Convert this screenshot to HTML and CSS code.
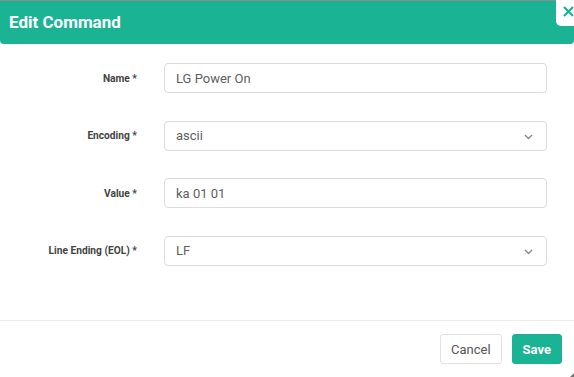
FILE: index.html
```html
<!DOCTYPE html>
<html lang="en">
<head>
  <meta charset="UTF-8">
  <meta name="viewport" content="width=device-width, initial-scale=1.0">
  <title>Edit Command</title>
  <link rel="stylesheet" href="styles.css">
</head>
<body>
  <div class="modal">
    <div class="modal-header">
      <h4>Edit Command</h4>
    </div>
    <button class="close-btn" aria-label="Close">
      <svg width="11" height="11" viewBox="0 0 11 11"><path d="M1 1L10 10M10 1L1 10" stroke="#1ab394" stroke-width="2.2" fill="none"/></svg>
    </button>
    <form class="modal-body">
      <label class="form-label">Name *</label>
      <div class="field"><input type="text" class="form-control" value="LG Power On"></div>

      <label class="form-label">Encoding *</label>
      <div class="field select">
        <div class="form-control">ascii</div>
        <svg class="chevron" width="9" height="6" viewBox="0 0 9 6"><path d="M1 1L4.5 4.5L8 1" stroke="#8a8a8a" stroke-width="1.4" fill="none"/></svg>
      </div>

      <label class="form-label">Value *</label>
      <div class="field"><input type="text" class="form-control" value="ka 01 01"></div>

      <label class="form-label">Line Ending (EOL) *</label>
      <div class="field select">
        <div class="form-control">LF</div>
        <svg class="chevron" width="9" height="6" viewBox="0 0 9 6"><path d="M1 1L4.5 4.5L8 1" stroke="#8a8a8a" stroke-width="1.4" fill="none"/></svg>
      </div>
    </form>
    <div class="modal-footer">
      <button class="btn btn-white">Cancel</button>
      <button class="btn btn-primary">Save</button>
    </div>
    <span class="grip"></span>
  </div>
</body>
</html>
```

FILE: styles.css
```css
body {
  margin: 0;
  background: #8c8c8c;
  font-family: Roboto, "Liberation Sans", Arial, sans-serif;
  color: #333;
}
.modal {
  position: relative;
  margin-top: 1px;
  height: 376px;
  background: #fff;
  display: flex;
  flex-direction: column;
}
.modal-header {
  background: #1ab394;
  height: 43px;
  border-radius: 0 0 4px 4px;
  display: flex;
  align-items: center;
  padding: 0 9px;
}
.modal-header h4 {
  margin: 0;
  color: #fff;
  font-size: 17px;
  font-weight: 700;
  padding-bottom: 2px;
}
.close-btn {
  position: absolute;
  top: -1px;
  right: 0;
  width: 18px;
  height: 26px;
  border: none;
  background: #fff;
  border-radius: 0 0 0 5px;
  padding: 0 0 0 7px;
  display: flex;
  align-items: flex-start;
  padding-top: 6px;
}
.modal-body {
  display: grid;
  grid-template-columns: 137px 1fr;
  column-gap: 27px;
  row-gap: 27.5px;
  padding: 19px 27px 0 0;
  align-items: center;
  flex: 1;
  align-content: start;
}
.form-label {
  text-align: right;
  font-size: 10.2px;
  font-weight: 700;
  color: #444;
}
.field {
  position: relative;
}
.form-control {
  box-sizing: border-box;
  width: 100%;
  height: 30px;
  border: 1px solid #dcdcdc;
  border-radius: 4px;
  padding: 0 11px;
  font-family: inherit;
  font-size: 13px;
  color: #606060;
  background: #fff;
  outline: none;
  display: flex;
  align-items: center;
}
.chevron {
  position: absolute;
  right: 14px;
  top: 13px;
}
.modal-footer {
  border-top: 1px solid #ececec;
  height: 56px;
  display: flex;
  justify-content: flex-end;
  align-items: center;
  gap: 10px;
  padding-right: 12px;
}
.btn {
  height: 30px;
  border-radius: 3px;
  font-family: inherit;
  font-size: 13px;
  padding: 0 10px;
  cursor: pointer;
}
.btn-white {
  background: #fff;
  border: 1px solid #e3e3e3;
  color: #555;
}
.btn-primary {
  background: #1ab394;
  border: 1px solid #1ab394;
  color: #fff;
  font-weight: 700;
}
.grip {
  position: absolute;
  right: 0;
  bottom: 0;
  width: 0;
  height: 0;
  border-left: 4px solid transparent;
  border-bottom: 4px solid #777;
}
```
